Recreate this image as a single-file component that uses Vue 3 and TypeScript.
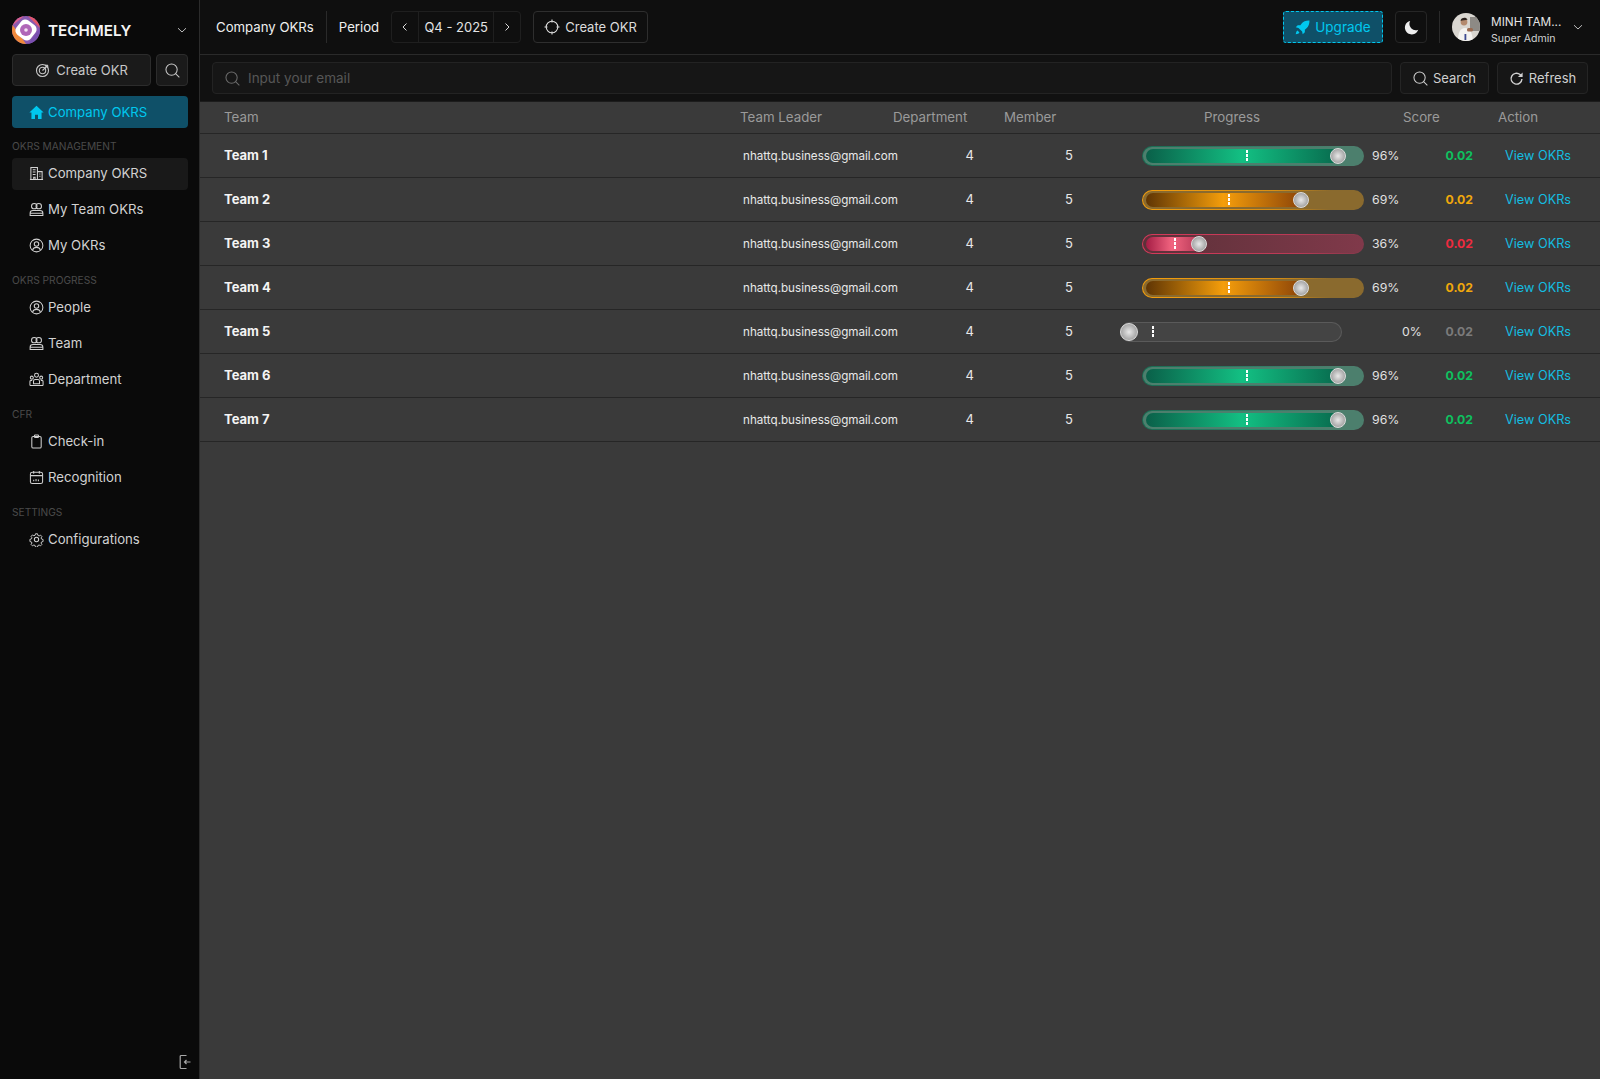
<script setup lang="ts">
type Tone = 'green' | 'orange' | 'red' | 'grey'
interface TeamRow { name: string; pct: number; tone: Tone }

const rows: TeamRow[] = [
  { name: 'Team 1', pct: 96, tone: 'green' },
  { name: 'Team 2', pct: 69, tone: 'orange' },
  { name: 'Team 3', pct: 36, tone: 'red' },
  { name: 'Team 4', pct: 69, tone: 'orange' },
  { name: 'Team 5', pct: 0, tone: 'grey' },
  { name: 'Team 6', pct: 96, tone: 'green' },
  { name: 'Team 7', pct: 96, tone: 'green' },
]
const geometry: Record<number, { fill: number; knob: number; tick: number }> = {
  96: { fill: 192, knob: 187, tick: 103 },
  69: { fill: 155, knob: 150, tick: 85 },
  36: { fill: 52, knob: 48, tick: 31 },
  0: { fill: 0, knob: 0, tick: 31 },
}
const fillWidth = (p: number) => `${geometry[p].fill}px`
const knobLeft = (p: number) => `${geometry[p].knob}px`
const tickLeft = (p: number) => `${geometry[p].tick}px`
</script>

<template>
  <div class="app">
    <aside class="side">
      <div class="brand">
        <svg class="logo" viewBox="0 0 28 28">
          <defs>
            <clipPath id="lc"><circle cx="14" cy="14" r="14" /></clipPath>
          </defs>
          <g clip-path="url(#lc)">
            <rect width="28" height="28" fill="#8a5ab0" />
            <path d="M0 8 L14 28 L0 28Z" fill="#f08a3c" />
            <path d="M16 0 L28 0 L28 12Z" fill="#e4566a" />
            <path d="M28 12 L28 28 L16 28Z" fill="#7a4fb0" />
            <path d="M0 0 L12 0 L0 10Z" fill="#d95f8f" />
          </g>
          <rect x="5" y="5" width="18" height="18" rx="5" fill="#fff" transform="rotate(38 14 14)" />
          <circle cx="14" cy="14" r="6" fill="#b066b8" />
          <circle cx="14" cy="14" r="1.8" fill="#f3e3f3" />
        </svg>
        <span class="brand-name">TECHMELY</span>
        <svg class="chev" viewBox="0 0 12 12"><path d="M2 4.200 6 8l4-3.800" /></svg>
      </div>
      <div class="quick">
        <button class="btn grow">
          <svg class="ic big" viewBox="0 0 16 16"><circle cx="7.500" cy="8.500" r="6" /><circle cx="7.500" cy="8.500" r="3.200" /><path d="M7.500 8.500 13 3M11 2.600v2.300h2.400" /></svg>
          Create OKR
        </button>
        <button class="btn square">
          <svg class="ic" viewBox="0 0 16 16"><circle cx="7" cy="7" r="6" /><path d="M11.300 11.300 15.300 15.300" /></svg>
        </button>
      </div>
      <div class="nav-item active">
        <svg class="ic solid" viewBox="0 0 16 16"><path d="M8 .8 15.600 8h-2.200v6.800H9.600v-4.400H6.400v4.400H2.600V8H.4Z" /></svg>
        Company OKRS
      </div>

      <div class="group">OKRS MANAGEMENT</div>
      <div class="nav-item current">
        <svg class="ic" viewBox="0 0 16 16"><path d="M2 14.500V1.500h7v13M9 6h5v8.500M1 14.500h14M4 4h3M4 6.500h3M4 9h3M11 8.500h1.200M11 11h1.200M5 14.500V12h1.500v2.500" /></svg>
        Company OKRS
      </div>
      <div class="nav-item">
        <svg class="ic" viewBox="0 0 16 16"><circle cx="5.600" cy="4.400" r="2.900" /><circle cx="10.400" cy="4.400" r="2.900" /><path d="M1.200 14.500v-2.400c0-1.700 1.400-3 3-3h7.600c1.600 0 3 1.300 3 3v2.400ZM1.200 12h13.600" /></svg>
        My Team OKRs
      </div>
      <div class="nav-item">
        <svg class="ic" viewBox="0 0 16 16"><circle cx="8" cy="8" r="6.800" /><circle cx="8" cy="6.400" r="2.400" /><path d="M3.800 13c.6-2 2.200-3 4.200-3s3.600 1 4.200 3" /></svg>
        My OKRs
      </div>

      <div class="group">OKRS PROGRESS</div>
      <div class="nav-item">
        <svg class="ic" viewBox="0 0 16 16"><circle cx="8" cy="8" r="6.800" /><circle cx="8" cy="6.400" r="2.400" /><path d="M3.800 13c.6-2 2.200-3 4.200-3s3.600 1 4.200 3" /></svg>
        People
      </div>
      <div class="nav-item">
        <svg class="ic" viewBox="0 0 16 16"><circle cx="5.600" cy="4.400" r="2.900" /><circle cx="10.400" cy="4.400" r="2.900" /><path d="M1.200 14.500v-2.400c0-1.700 1.400-3 3-3h7.600c1.600 0 3 1.300 3 3v2.400ZM1.200 12h13.600" /></svg>
        Team
      </div>
      <div class="nav-item">
        <svg class="ic" viewBox="0 0 16 16"><circle cx="8" cy="3.500" r="2.100" /><circle cx="3" cy="6" r="1.600" /><circle cx="13" cy="6" r="1.600" /><path d="M4.800 12.500V9.800c0-1 .8-1.800 1.800-1.800h2.800c1 0 1.800.8 1.800 1.800v2.700ZM1 14.500V10c0-.5.500-1 1-1h1.400M15 14.500V10c0-.5-.5-1-1-1h-1.400M1 14.500h14" /></svg>
        Department
      </div>

      <div class="group">CFR</div>
      <div class="nav-item">
        <svg class="ic" viewBox="0 0 16 16"><rect x="3" y="2.600" width="10" height="12.400" rx="1.500" /><rect x="5.800" y="1" width="4.400" height="2.600" rx=".8" /></svg>
        Check-in
      </div>
      <div class="nav-item">
        <svg class="ic" viewBox="0 0 16 16"><rect x="1.500" y="2.500" width="13" height="12" rx="2" /><path d="M1.500 6h13M5 1v3M11 1v3M5 12v-1.500M7.500 12V9.500M10 12v-2" /></svg>
        Recognition
      </div>

      <div class="group">SETTINGS</div>
      <div class="nav-item">
        <svg class="ic" viewBox="0 0 16 16"><circle cx="8" cy="8" r="2.300" /><path d="M6.800 1.200h2.400l.4 1.900 1.500.7 1.700-1 1.600 1.700-1 1.700.6 1.300 1.800.5v2.400l-1.800.5-.6 1.300 1 1.700-1.600 1.600-1.700-1-1.500.7-.4 1.900H6.800l-.4-1.900-1.500-.7-1.700 1-1.600-1.600 1-1.700-.6-1.300-1.800-.5V7.800l1.800-.5.600-1.300-1-1.700 1.600-1.700 1.700 1 1.500-.7Z" transform="translate(.8 .8) scale(.9)" /></svg>
        Configurations
      </div>

      <div class="side-foot">
        <svg class="exit" viewBox="0 0 12 16"><path d="M7.500 1.500H2.200c-.6 0-1 .4-1 1v11c0 .6.400 1 1 1h5.300" /><path d="M11.500 8H5.500M7.500 6l-2 2 2 2" /></svg>
      </div>
    </aside>

    <main class="main">
      <header class="top">
        <span class="crumb">Company OKRs</span>
        <span class="vline"></span>
        <span class="period">Period</span>
        <div class="stepper">
          <span class="step"><svg class="mini" viewBox="0 0 12 12"><path d="M7.500 2.500 4 6l3.500 3.500" /></svg></span>
          <span class="quarter">Q4 - 2025</span>
          <span class="step"><svg class="mini" viewBox="0 0 12 12"><path d="M4.500 2.500 8 6 4.500 9.500" /></svg></span>
        </div>
        <button class="outline">
          <svg class="ic big" viewBox="0 0 16 16"><circle cx="8" cy="8" r="5.800" /><path d="M8 .5v3M8 12.500v3M.5 8h3M12.500 8h3" /></svg>
          Create OKR
        </button>
        <div class="spacer"></div>
        <button class="upgrade">
          <svg class="rocket" viewBox="0 0 16 16"><path d="M15.400.6c-3.500-.2-6.500 1-8.500 3.400L5.700 5.500H2.900L.8 7.800l2.900.6 3.900 3.900.6 2.900 2.300-2.100v-2.800l1.500-1.200c2.400-2 3.600-5 3.400-8.500ZM2.700 11.200c-1 .6-1.600 2-1.900 3.900 1.900-.3 3.300-.9 3.900-1.900Z" /></svg>
          Upgrade
        </button>
        <button class="moon">
          <svg viewBox="0 0 16 16" class="moon-ic"><path d="M6.600 1A7.300 7.300 0 1 0 15.200 10.400 6.800 6.800 0 0 1 6.600 1Z" /></svg>
        </button>
        <span class="vline right"></span>
        <div class="avatar">
          <svg viewBox="0 0 28 28">
            <rect width="28" height="28" fill="#d9d6d0" />
            <rect x="18" y="4" width="10" height="14" fill="#8d8a85" />
            <path d="M6 28c0-8 2-13 7-13s7 4 8 13Z" fill="#f4f3f0" />
            <circle cx="12" cy="9" r="3.400" fill="#b48a6e" />
            <path d="M8.600 8c0-3 5-4.500 7-1.500L14 7l-4 .5Z" fill="#2a211c" />
            <rect x="15" y="15" width="6" height="3.500" rx="1.500" fill="#9a6a50" />
            <rect x="12.500" y="21" width="1.800" height="6" fill="#3d4a90" />
          </svg>
        </div>
        <div class="user">
          <span class="uname">MINH TAM...</span>
          <span class="urole">Super Admin</span>
        </div>
        <svg class="chev user-chev" viewBox="0 0 12 12"><path d="M2 4.200 6 8l4-3.800" /></svg>
      </header>

      <div class="searchbar">
        <div class="input">
          <svg class="ic dim" viewBox="0 0 16 16"><circle cx="7" cy="7" r="6" /><path d="M11.300 11.300 15.300 15.300" /></svg>
          <span>Input your email</span>
        </div>
        <button class="tool search">
          <svg class="ic" viewBox="0 0 16 16"><circle cx="7" cy="7" r="6" /><path d="M11.300 11.300 15.300 15.300" /></svg>
          Search
        </button>
        <button class="tool refresh">
          <svg class="ic thick" viewBox="0 0 16 16"><path d="M13.800 8.500A5.800 5.800 0 1 1 11.800 3.800L13.500 5.500" /><path d="M14.500 1.500V6.500H9.500" class="fillme" /></svg>
          Refresh
        </button>
      </div>

      <div class="thead">
        <span>Team</span><span>Team Leader</span><span>Department</span><span>Member</span><span>Progress</span><span>Score</span><span>Action</span>
      </div>
      <div v-for="r in rows" :key="r.name" class="trow">
        <span class="tname">{{ r.name }}</span>
        <span class="email">nhattq.business@gmail.com</span>
        <span class="num">4</span>
        <span class="num">5</span>
        <div class="prog" :class="{ zero: r.pct === 0 }">
          <div class="bar" :class="r.tone">
            <div class="fill" :style="{ width: fillWidth(r.pct) }"></div>
            <i class="tick" :style="{ left: tickLeft(r.pct) }"></i>
            <i class="knob" :style="{ left: knobLeft(r.pct) }"></i>
          </div>
          <span class="pct">{{ r.pct }}%</span>
        </div>
        <span class="score" :class="r.tone">0.02</span>
        <a class="view">View OKRs</a>
      </div>
    </main>
  </div>
</template>

<style>
html, body { margin: 0; background: #3a3a3a; }
</style>

<style scoped>
.app {
  display: flex;
  width: 1600px;
  height: 1079px;
  overflow: hidden;
  font-family: Inter, "Noto Sans", sans-serif;
  font-size: 14px;
  color: #e8e8e8;
  background: #3a3a3a;
}
button { font: inherit; color: inherit; cursor: pointer; }
svg { display: block; flex: none; }
.ic { width: 15px; height: 15px; fill: none; stroke: currentColor; stroke-width: 1.1; }
.ic.big { width: 16px; height: 16px; }
.ic.thick { stroke-width: 1.5; }
.ic.solid { fill: #00c8ef; stroke: none; }
.ic.dim { color: #6c6c6c; }

.side {
  width: 200px;
  flex: none;
  box-sizing: border-box;
  padding: 16px 11px 0 12px;
  background: #0a0a0a;
  border-right: 1px solid #2b2b2b;
  display: flex;
  flex-direction: column;
  position: relative;
}
.brand { display: flex; align-items: center; height: 28px; gap: 8px; }
.logo { width: 28px; height: 28px; }
.brand-name { font-size: 15.2px; font-weight: 600; color: #f4f4f4; flex: 1; }
.chev { width: 12px; height: 12px; fill: none; stroke: #bdbdbd; stroke-width: 1; }
.quick { display: flex; gap: 5px; margin-top: 10px; }
.btn {
  height: 32px;
  box-sizing: border-box;
  border: 1px solid #2c2c2c;
  background: #1a1a1a;
  border-radius: 4px;
  color: #c8c8c8;
  font-size: 13px;
  display: flex;
  align-items: center;
  justify-content: center;
  gap: 5px;
  padding: 0;
}
.btn.grow { flex: 1; }
.btn.square { width: 32px; }
.nav-item {
  height: 32px;
  box-sizing: border-box;
  margin-bottom: 4px;
  display: flex;
  align-items: center;
  gap: 4px;
  padding: 0 0 2px 17px;
  border-radius: 4px;
  color: #d2d2d2;
  font-size: 13.2px;
}
.nav-item.active { margin-top: 10px; margin-bottom: 0; padding-bottom: 0; background: #0f5068; color: #00c8ef; }
.nav-item.current { background: #191919; }
.group {
  font-size: 10.2px;
  color: #4a4a4a;
  line-height: 14px;
  margin: 7px 0 5px;
}
.nav-item.active + .group { margin-top: 11px; }
.side-foot { position: absolute; right: 8px; bottom: 9px; }
.exit { width: 12px; height: 16px; fill: none; stroke: #a8a8a8; stroke-width: 1.2; }

.main { flex: 1; min-width: 0; display: flex; flex-direction: column; }
.top {
  height: 55px;
  box-sizing: border-box;
  background: #0f0f0f;
  border-bottom: 1px solid #2a2a2a;
  display: flex;
  align-items: center;
  padding: 0 16px 0 16px;
  font-size: 13.2px;
}
.crumb { color: #efefef; }
.vline { width: 1px; height: 32px; background: #2a2a2a; margin: 0 12px; }
.period { color: #efefef; }
.stepper {
  display: flex;
  align-items: stretch;
  height: 32px;
  box-sizing: border-box;
  border: 1px solid #1f1f1f;
  border-radius: 4px;
  margin-left: 12px;
}
.step { width: 26px; display: flex; align-items: center; justify-content: center; }
.mini { width: 12px; height: 12px; fill: none; stroke: #d8d8d8; stroke-width: 1; }
.quarter {
  width: 76px;
  box-sizing: border-box;
  display: flex;
  align-items: center;
  justify-content: center;
  border-left: 1px solid #1f1f1f;
  border-right: 1px solid #1f1f1f;
  color: #e4e4e4;
  font-size: 13px;
}
.outline {
  height: 32px;
  box-sizing: border-box;
  margin-left: 12px;
  padding: 0 10px;
  display: flex;
  align-items: center;
  gap: 5px;
  background: transparent;
  border: 1px solid #2e2e2e;
  border-radius: 4px;
  color: #dcdcdc;
  font-size: 13px;
}
.spacer { flex: 1; }
.upgrade {
  width: 100px;
  height: 32px;
  box-sizing: border-box;
  display: flex;
  align-items: center;
  justify-content: center;
  gap: 5px;
  background: #0f5068;
  border: 1px dashed #00c8ef;
  border-radius: 3px;
  color: #00c8ef;
  font-size: 13.5px;
  padding: 0;
}
.rocket { width: 15px; height: 15px; fill: #00c8ef; }
.moon {
  width: 32px;
  height: 32px;
  margin-left: 12px;
  padding: 0;
  box-sizing: border-box;
  background: transparent;
  border: 1px solid #262626;
  border-radius: 4px;
  display: flex;
  align-items: center;
  justify-content: center;
}
.moon-ic { width: 15px; height: 15px; fill: #eeeeee; }
.avatar { width: 28px; height: 28px; border-radius: 50%; overflow: hidden; }
.user { display: flex; flex-direction: column; margin-left: 11px; width: 75px; padding-top: 5px; }
.uname { font-size: 11.8px; line-height: 17px; color: #e4e4e4; white-space: nowrap; }
.urole { font-size: 10.6px; line-height: 15px; color: #cfcfcf; white-space: nowrap; }
.user-chev { margin-left: 6px; }

.searchbar {
  height: 46px;
  box-sizing: border-box;
  background: #111111;
  display: flex;
  align-items: center;
  gap: 8px;
  padding: 0 12px;
}
.input {
  flex: 1;
  height: 32px;
  box-sizing: border-box;
  border: 1px solid #232323;
  background: #161616;
  border-radius: 4px;
  display: flex;
  align-items: center;
  gap: 8px;
  padding-left: 12px;
  color: #565656;
  font-size: 13.5px;
}
.tool {
  height: 32px;
  box-sizing: border-box;
  padding: 0;
  display: flex;
  align-items: center;
  justify-content: center;
  gap: 5px;
  background: #161616;
  border: 1px solid #252525;
  border-radius: 4px;
  color: #d0d0d0;
  font-size: 13px;
}
.tool.search { width: 89px; }
.tool.refresh { width: 91px; }
.fillme { fill: currentColor; stroke: none; }

.thead {
  height: 33px;
  box-sizing: border-box;
  display: grid;
  grid-template-columns: 516px 153px 111px 200px 199px 95px 1fr;
  align-items: center;
  padding: 0 0 2px 24px;
  border-top: 1px solid #1c1c1c;
  border-bottom: 1px solid #262626;
  color: #9a9a9a;
  font-size: 13.3px;
}
.trow {
  height: 44px;
  box-sizing: border-box;
  display: grid;
  grid-template-columns: 519px 177px 54px 99px 327px 73px 1fr;
  align-items: center;
  padding-left: 24px;
  border-bottom: 1px solid #262626;
}
.tname { font-size: 13px; font-weight: 700; color: #f4f4f4; margin-bottom: 2px; }
.email { font-size: 11.65px; color: #e8e8e8; white-space: nowrap; }
.num { text-align: right; font-size: 13px; color: #e8e8e8; margin-bottom: 2px; }
.prog { display: flex; align-items: center; }
.bar {
  position: relative;
  width: 222px;
  height: 20px;
  box-sizing: border-box;
  margin-left: 69px;
  border-radius: 10px;
  border: 1px solid transparent;
  flex: none;
}
.zero .bar { margin-left: 47px; }
.pct { margin-left: 8px; font-size: 12.3px; color: #e0e0e0; }
.zero .pct { margin-left: 60px; }
.fill {
  position: absolute;
  left: 3px;
  top: 2px;
  bottom: 2px;
  border-radius: 7px 0 0 7px;
}
.tick {
  position: absolute;
  top: 3px;
  bottom: 3px;
  width: 2px;
  background: repeating-linear-gradient(to bottom, #fff 0 3px, transparent 3px 4px);
}
.knob {
  position: absolute;
  top: 1px;
  width: 16px;
  height: 16px;
  box-sizing: border-box;
  border-radius: 50%;
  border: 1px solid #dcdcdc;
  background: radial-gradient(circle, #e8e8e8 0%, #b4b4b4 55%, #8a8a8a 100%);
}
.bar.green {
  background: linear-gradient(#4c7f6d, #4c7f6d) padding-box,
    linear-gradient(90deg, #1a6d54 0%, #2f7d66 50%, #4c7f6d 90%) border-box;
}
.bar.green .fill { background: linear-gradient(90deg, #0a6049, #13c083 50%, #086b4e); }
.bar.orange {
  background: linear-gradient(#8a6a2e, #8a6a2e) padding-box,
    linear-gradient(90deg, #f59e0b 0%, #d98e12 60%, #8a6a2e 85%) border-box;
}
.bar.orange .fill { background: linear-gradient(90deg, #5f3504, #f59e0b 50%, #8d4508); }
.bar.red {
  background: linear-gradient(90deg, #5c3139, #80394a) padding-box,
    linear-gradient(90deg, #d6395a, #b83a55 70%, #80394a) border-box;
}
.bar.red .fill { background: linear-gradient(90deg, #a51d45, #f26580 50%, #b83a58); }
.bar.grey {
  background: linear-gradient(#444444, #444444) padding-box,
    linear-gradient(#5a5a5a, #5a5a5a) border-box;
}
.bar.grey .knob { top: 0; left: -1px !important; width: 18px; height: 18px; }
.bar.grey .fill { display: none; }
.score { text-align: right; font-size: 12.2px; font-weight: 700; }
.score.green { color: #0ec15f; }
.score.orange { color: #f0a80c; }
.score.red { color: #ee2b3f; }
.score.grey { color: #7b7b7b; }
.view { margin-left: 32px; font-size: 12.7px; color: #14bde0; white-space: nowrap; }
</style>
